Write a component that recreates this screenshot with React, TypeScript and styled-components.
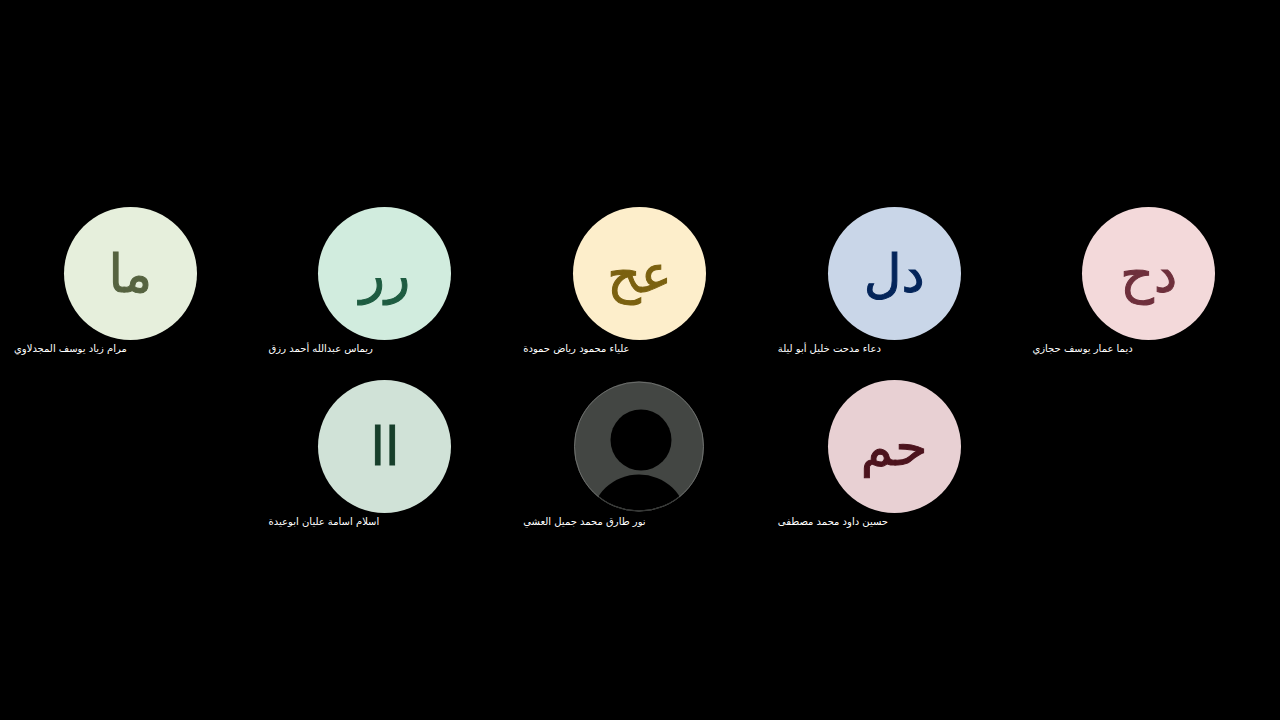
import React from "react";
import styled, { createGlobalStyle } from "styled-components";

const GlobalStyle = createGlobalStyle`
  body {
    margin: 0;
    background: #000;
    font-family: "DejaVu Sans", sans-serif;
  }
`;

const Stage = styled.main`
  box-sizing: border-box;
  min-height: 100vh;
  display: flex;
  flex-direction: column;
  justify-content: center;
  gap: 22px;
  padding: 18px 4px 0 3px;
`;

const Row = styled.ul`
  display: flex;
  justify-content: center;
  margin: 0;
  padding: 0;
  list-style: none;
`;

const Tile = styled.li`
  flex: 0 0 20%;
  min-width: 0;
  display: flex;
  flex-direction: column;
  align-items: center;
`;

const Avatar = styled.div<{ $bg: string; $ink: string }>`
  width: 133px;
  height: 133px;
  border-radius: 50%;
  display: flex;
  align-items: center;
  justify-content: center;
  background: ${(p) => p.$bg};
  color: ${(p) => p.$ink};
  font-size: 52px;
  line-height: 60px;
  -webkit-text-stroke: 1px ${(p) => p.$ink};
`;

const Placeholder = styled.svg`
  display: block;
  width: 133px;
  height: 133px;
`;

const Name = styled.span`
  box-sizing: border-box;
  width: 100%;
  padding-left: 11px;
  color: #fff;
  font-size: 10px;
  line-height: 18px;
  white-space: nowrap;
  text-align: left;
`;

type Person = { name: string; initials?: string; bg?: string; ink?: string };

const rows: Person[][] = [
  [
    { name: "مرام زياد يوسف المجدلاوي", initials: "ما", bg: "#e6efdc", ink: "#566340" },
    { name: "ريماس عبدالله أحمد رزق", initials: "رر", bg: "#d1ecde", ink: "#1e5c41" },
    { name: "علياء محمود رياض حمودة", initials: "عح", bg: "#fdeecb", ink: "#7b6110" },
    { name: "دعاء مدحت خليل أبو ليلة", initials: "دل", bg: "#c9d6e8", ink: "#04255a" },
    { name: "ديما عمار يوسف حجازي", initials: "دح", bg: "#f3d9da", ink: "#6e303c" },
  ],
  [
    { name: "اسلام اسامة عليان ابوعيدة", initials: "اا", bg: "#d0e2d7", ink: "#173f2b" },
    { name: "نور طارق محمد جميل العشي" },
    { name: "حسين داود محمد مصطفى", initials: "حم", bg: "#e8d0d3", ink: "#4c131d" },
  ],
];

function PersonPlaceholder() {
  return (
    <Placeholder viewBox="0 0 133 133" aria-hidden="true">
      <defs>
        <clipPath id="disc">
          <circle cx="66" cy="66.5" r="65" />
        </clipPath>
      </defs>
      <circle cx="66" cy="66.5" r="65" fill="#434643" />
      <g clipPath="url(#disc)">
        <circle cx="68" cy="60" r="30.5" fill="#000" />
        <ellipse cx="66" cy="139" rx="47" ry="44.5" fill="#000" />
      </g>
      <circle cx="66" cy="66.5" r="64.5" fill="none" stroke="#6c6e6c" strokeWidth="1" />
      <path d="M26 117A64.500 64.500 0 0 0 106 117" fill="none" stroke="#303230" strokeWidth="1" />
    </Placeholder>
  );
}

export default function App() {
  return (
    <>
      <GlobalStyle />
      <Stage>
        {rows.map((people, i) => (
          <Row key={i}>
            {people.map((p) => (
              <Tile key={p.name}>
                {p.initials ? (
                  <Avatar $bg={p.bg!} $ink={p.ink!} dir="rtl">
                    {p.initials}
                  </Avatar>
                ) : (
                  <PersonPlaceholder />
                )}
                <Name>
                  <bdi>{p.name}</bdi>
                </Name>
              </Tile>
            ))}
          </Row>
        ))}
      </Stage>
    </>
  );
}
